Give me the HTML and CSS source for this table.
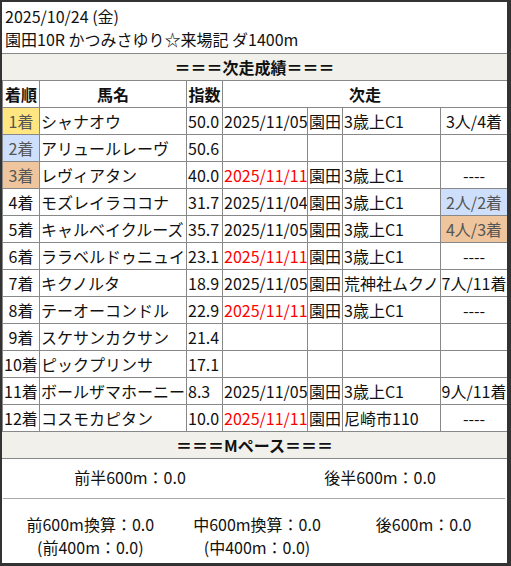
FILE: index.html
```html
<!DOCTYPE html>
<html lang="ja">
<head>
<meta charset="utf-8">
<link rel="stylesheet" href="styles.css">
</head>
<body>
<div class="frame">
  <div class="title">
    <div>2025/10/24 (金)</div>
    <div>園田10R かつみさゆり☆来場記 ダ1400m</div>
  </div>
  <div class="sec">＝＝＝次走成績＝＝＝</div>
  <table class="res">
    <colgroup>
      <col class="c1"><col class="c2"><col class="c3"><col class="c4"><col class="c5"><col class="c6"><col class="c7">
    </colgroup>
    <thead>
      <tr><th>着順</th><th>馬名</th><th>指数</th><th colspan="4">次走</th></tr>
    </thead>
    <tbody>
      <tr><td class="rk gold">1着</td><td>シャナオウ</td><td>50.0</td><td>2025/11/05</td><td>園田</td><td>3歳上C1</td><td class="ct">3人/4着</td></tr>
      <tr><td class="rk blue">2着</td><td>アリュールレーヴ</td><td>50.6</td><td></td><td></td><td></td><td></td></tr>
      <tr><td class="rk bronze">3着</td><td>レヴィアタン</td><td>40.0</td><td class="red">2025/11/11</td><td>園田</td><td>3歳上C1</td><td class="ct">----</td></tr>
      <tr><td class="rk">4着</td><td>モズレイラココナ</td><td>31.7</td><td>2025/11/04</td><td>園田</td><td>3歳上C1</td><td class="ct blue">2人/2着</td></tr>
      <tr><td class="rk">5着</td><td>キャルベイクルーズ</td><td>35.7</td><td>2025/11/05</td><td>園田</td><td>3歳上C1</td><td class="ct bronze">4人/3着</td></tr>
      <tr><td class="rk">6着</td><td>ララベルドゥニュイ</td><td>23.1</td><td class="red">2025/11/11</td><td>園田</td><td>3歳上C1</td><td class="ct">----</td></tr>
      <tr><td class="rk">7着</td><td>キクノルタ</td><td>18.9</td><td>2025/11/05</td><td>園田</td><td>荒神社ムクノ</td><td class="ct">7人/11着</td></tr>
      <tr><td class="rk">8着</td><td>テーオーコンドル</td><td>22.9</td><td class="red">2025/11/11</td><td>園田</td><td>3歳上C1</td><td class="ct">----</td></tr>
      <tr><td class="rk">9着</td><td>スケサンカクサン</td><td>21.4</td><td></td><td></td><td></td><td></td></tr>
      <tr><td class="rk">10着</td><td>ピックプリンサ</td><td>17.1</td><td></td><td></td><td></td><td></td></tr>
      <tr><td class="rk">11着</td><td>ボールザマホーニー</td><td>8.3</td><td>2025/11/05</td><td>園田</td><td>3歳上C1</td><td class="ct">9人/11着</td></tr>
      <tr><td class="rk">12着</td><td>コスモカピタン</td><td>10.0</td><td class="red">2025/11/11</td><td>園田</td><td>尼崎市110</td><td class="ct">----</td></tr>
    </tbody>
  </table>
  <div class="sec sec2">＝＝＝Mペース＝＝＝</div>
  <div class="pace2">
    <div>前半600m：0.0</div>
    <div>後半600m：0.0</div>
  </div>
  <div class="pace3">
    <div>前600m換算：0.0<br>(前400m：0.0)</div>
    <div>中600m換算：0.0<br>(中400m：0.0)</div>
    <div>後600m：0.0</div>
  </div>
</div>
</body>
</html>
```
FILE: styles.css
```css
html, body {
  margin: 0;
  padding: 0;
  background: #333;
}
body {
  padding: 2px 4px 3px 2px;
  font-family: "Noto Sans CJK JP", "Noto Sans", sans-serif;
  font-size: 16px;
  color: #111;
}
.frame {
  background: #fff;
  width: 505px;
  height: 561px;
  overflow: hidden;
}
.title {
  padding: 3px 3px 2px;
  line-height: 23px;
}
.sec {
  border-top: 1px solid #888;
  background: #f1f0eb;
  font-weight: bold;
  text-align: center;
  line-height: 24px;
  padding: 1px 0;
}
.sec2 {
  border-top: none;
  border-bottom: 1px solid #888;
}
.res {
  border-collapse: collapse;
  table-layout: fixed;
  width: 505px;
}
.c1 { width: 37px; }
.c2 { width: 147px; }
.c3 { width: 36px; }
.c4 { width: 85px; }
.c5 { width: 35px; }
.c6 { width: 98px; }
.c7 { width: 67px; }
.res th, .res td {
  border: 1px solid #888;
  line-height: 24px;
  padding: 1px 1px;
  white-space: nowrap;
  overflow: hidden;
  height: 24px;
}
.res th {
  font-weight: bold;
  text-align: center;
}
.res td { text-align: left; }
.res td.rk, .res td.ct { text-align: center; padding: 1px 0; }
.red { color: #ff0000; }
.gold { background: #ffe680; color: #555; }
.blue { background: #cddffb; color: #555; }
.bronze { background: #efc59d; color: #555; }
.pace2 {
  display: grid;
  grid-template-columns: 1fr 1fr;
  text-align: center;
  line-height: 23px;
  padding: 7px 0 9px 2px;
  border-bottom: 1px solid #aaa;
  margin: 0 2px 0 1px;
}
.pace3 {
  display: grid;
  grid-template-columns: 1fr 1fr 1fr;
  text-align: center;
  line-height: 23px;
  padding: 14px 0 3px 5px;
}
```
